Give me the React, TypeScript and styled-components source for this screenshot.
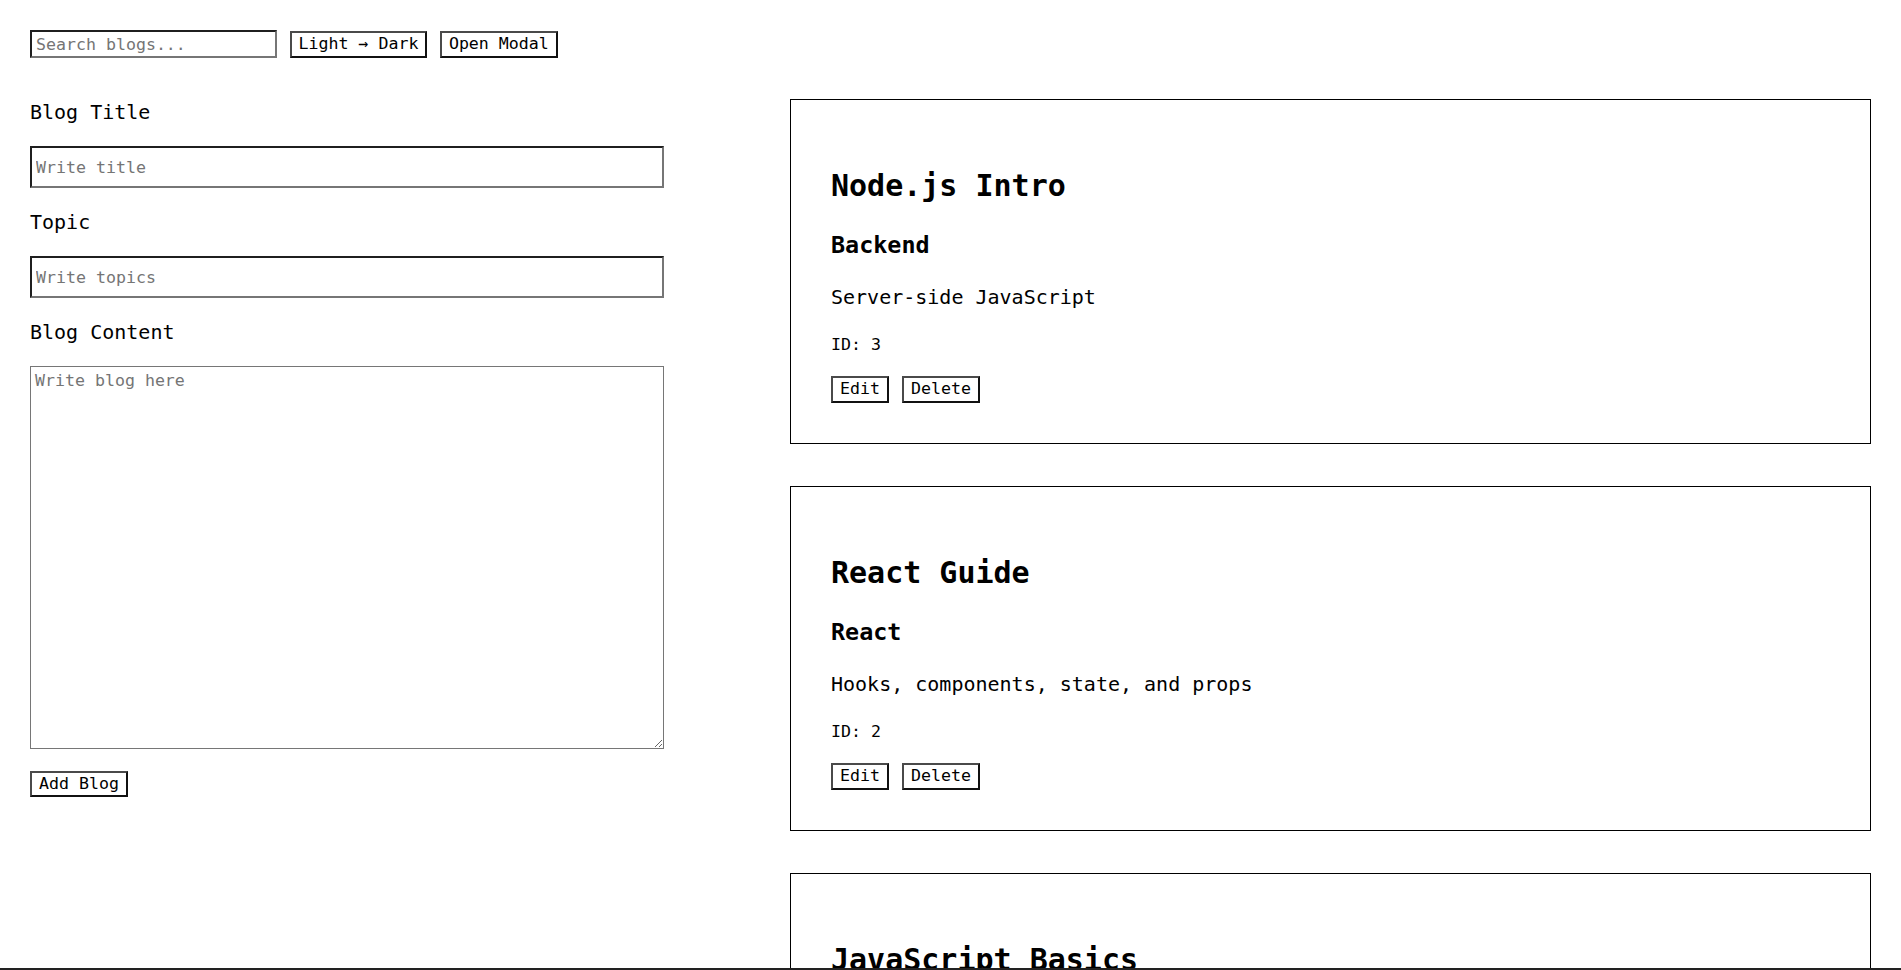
import React, { useState } from "react";
import styled, { createGlobalStyle } from "styled-components";

const GlobalStyle = createGlobalStyle`
  html, body {
    margin: 0;
    padding: 0;
    background: #ffffff;
  }
  body {
    font-family: "DejaVu Sans Mono", "Liberation Mono", monospace;
    font-size: 20px;
    color: #000000;
  }
  * { box-sizing: border-box; }
`;

const Page = styled.div`
  height: 100vh;
  padding: 30px 30px 0;
  border-bottom: 2px solid #222222;
  overflow: hidden;
`;

const TopBar = styled.div`
  display: flex;
  align-items: flex-end;
  gap: 12.5px;
  height: 28px;
`;

const insetBorder = `
  border-style: solid;
  border-width: 2px;
  border-color: #1f1f1f #767676 #767676 #1f1f1f;
`;

const SearchInput = styled.input`
  ${insetBorder}
  width: 247px;
  height: 28px;
  padding: 0 4px;
  font-family: inherit;
  font-size: 16.6px;
  color: #000;
  background: #fff;
  outline: none;
  &::placeholder { color: #757575; }
`;

const Button = styled.button`
  height: 27px;
  padding: 0 7px;
  background: #ffffff;
  color: #000000;
  font-family: inherit;
  font-size: 16.6px;
  line-height: 1;
  border-style: solid;
  border-width: 2px;
  border-color: #4a4a4a #111111 #111111 #4a4a4a;
  cursor: pointer;
  white-space: nowrap;
`;

const Layout = styled.div`
  margin-top: 41px;
  display: grid;
  grid-template-columns: 634px 1fr;
  column-gap: 126px;
  align-items: start;
`;

const Form = styled.form`
  display: flex;
  flex-direction: column;
  gap: 21px;
`;

const FieldLabel = styled.label`
  display: block;
  font-size: 20px;
  line-height: 26px;
`;

const TextInput = styled.input`
  ${insetBorder}
  width: 100%;
  height: 42px;
  padding: 0 4px;
  font-family: inherit;
  font-size: 16.6px;
  color: #000;
  background: #fff;
  outline: none;
  &::placeholder { color: #757575; }
`;

const TextArea = styled.textarea`
  width: 100%;
  height: 383px;
  padding: 4px;
  border: 1px solid #767676;
  font-family: inherit;
  font-size: 16.6px;
  color: #000;
  background: #fff;
  outline: none;
  resize: both;
  &::placeholder { color: #757575; }
`;

const SubmitButton = styled(Button)`
  align-self: flex-start;
  height: 26px;
  margin-top: 1px;
`;

const CardList = styled.div`
  display: flex;
  flex-direction: column;
  gap: 42px;
`;

const Card = styled.article`
  border: 1px solid #000000;
  padding: 40px;
`;

const CardTitle = styled.h2`
  margin: 28px 0 0;
  font-size: 30px;
  line-height: 36px;
  font-weight: 700;
`;

const CardTopic = styled.h3`
  margin: 27px 0 0;
  font-size: 23.4px;
  line-height: 28px;
  font-weight: 700;
`;

const CardBody = styled.p`
  margin: 26px 0 0;
  font-size: 20px;
  line-height: 24px;
`;

const CardMeta = styled.p`
  margin: 26px 0 0;
  font-size: 16.6px;
  line-height: 20px;
`;

const CardActions = styled.div`
  margin-top: 21px;
  display: flex;
  gap: 13px;
`;

type Blog = { id: number; title: string; topic: string; content: string };

const initialBlogs: Blog[] = [
  { id: 3, title: "Node.js Intro", topic: "Backend", content: "Server-side JavaScript" },
  { id: 2, title: "React Guide", topic: "React", content: "Hooks, components, state, and props" },
  { id: 1, title: "JavaScript Basics", topic: "JavaScript", content: "Variables, functions, and loops" },
];

export default function App() {
  const [blogs] = useState<Blog[]>(initialBlogs);
  const [search, setSearch] = useState("");
  const [title, setTitle] = useState("");
  const [topic, setTopic] = useState("");
  const [content, setContent] = useState("");

  const visible = blogs.filter((b) =>
    b.title.toLowerCase().includes(search.toLowerCase())
  );

  return (
    <>
      <GlobalStyle />
      <Page>
        <TopBar>
          <SearchInput
            placeholder="Search blogs..."
            value={search}
            onChange={(e) => setSearch(e.target.value)}
          />
          <Button type="button">Light → Dark</Button>
          <Button type="button">Open Modal</Button>
        </TopBar>
        <Layout>
          <Form onSubmit={(e) => e.preventDefault()}>
            <FieldLabel htmlFor="title">Blog Title</FieldLabel>
            <TextInput
              id="title"
              placeholder="Write title"
              value={title}
              onChange={(e) => setTitle(e.target.value)}
            />
            <FieldLabel htmlFor="topic">Topic</FieldLabel>
            <TextInput
              id="topic"
              placeholder="Write topics"
              value={topic}
              onChange={(e) => setTopic(e.target.value)}
            />
            <FieldLabel htmlFor="content">Blog Content</FieldLabel>
            <TextArea
              id="content"
              placeholder="Write blog here"
              value={content}
              onChange={(e) => setContent(e.target.value)}
            />
            <SubmitButton type="submit">Add Blog</SubmitButton>
          </Form>
          <CardList>
            {visible.map((b) => (
              <Card key={b.id}>
                <CardTitle>{b.title}</CardTitle>
                <CardTopic>{b.topic}</CardTopic>
                <CardBody>{b.content}</CardBody>
                <CardMeta>ID: {b.id}</CardMeta>
                <CardActions>
                  <Button type="button">Edit</Button>
                  <Button type="button">Delete</Button>
                </CardActions>
              </Card>
            ))}
          </CardList>
        </Layout>
      </Page>
    </>
  );
}
